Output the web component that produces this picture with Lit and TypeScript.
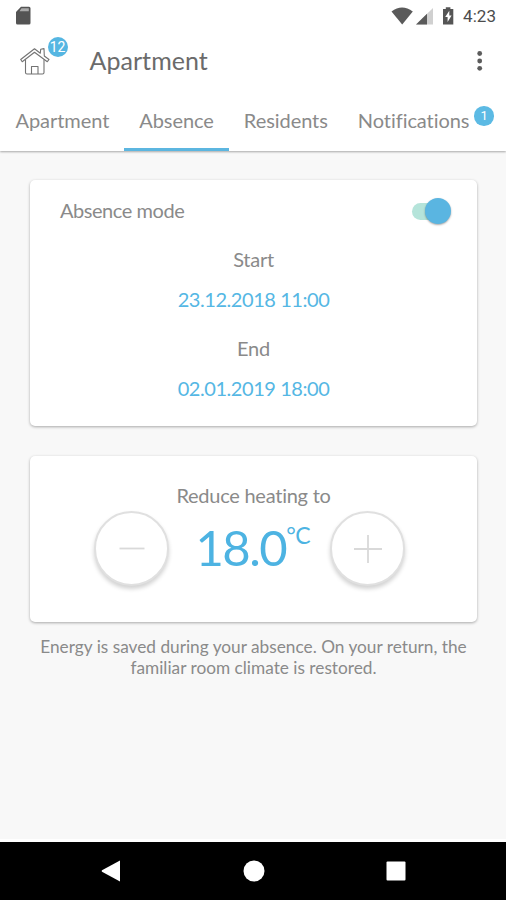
import { LitElement, html, css, svg } from "lit";
import { customElement, property, state } from "lit/decorators.js";
import { classMap } from "lit/directives/class-map.js";

@customElement("status-bar")
class StatusBar extends LitElement {
  static styles = css`
    :host { display: flex; height: 31px; align-items: center; justify-content: space-between; padding: 0 9px 0 15px; box-sizing: border-box; }
    .right { display: flex; align-items: center; }
    svg { display: block; }
    .time { font: 400 17px/20px Roboto, sans-serif; color: #4c4c4c; margin-left: 8px; width: 34px; white-space: nowrap; letter-spacing: 0.1px; }
  `;
  render() {
    return html`
      <svg width="17" height="20" viewBox="0 0 17 20">
        <path d="M6 .800H14a1.500 1.500 0 0 1 1.500 1.500V17A1.500 1.500 0 0 1 14 18.500H2.500A1.500 1.500 0 0 1 1 17V6Z" fill="#545454" />
        <path d="M6.500 2.300h7.300v3h-9.300Z" fill="#aaa" />
      </svg>
      <div class="right">
        <svg width="64" height="20" viewBox="391 5 64 20">
          <path d="M391.500 10.500Q402 2.300 412.800 10.500L402.200 23.500Z" fill="#5a5a5a" />
          <path d="M433 7V23.500H416Z" fill="#d0d0d0" />
          <path d="M427 12.800V23.500H416Z" fill="#5a5a5a" />
          <path d="M443 8h2.800V6.300h4.600V8h2.900V23.500H443Z" fill="#555" />
          <path d="M449.300 9.800L445.200 16h2.400v5l4-6.500h-2.300Z" fill="#fff" />
        </svg>
        <span class="time">4:23</span>
      </div>
    `;
  }
}

@customElement("app-header")
class AppHeader extends LitElement {
  static styles = css`
    :host { display: flex; height: 60px; align-items: center; padding: 0 20px; box-sizing: border-box; }
    .home { position: relative; width: 30px; height: 30px; margin-right: 39.500px; }
    .home svg { display: block; }
    .badge { position: absolute; left: 27.500px; top: -9px; width: 20px; height: 20px; border-radius: 50%; background: #55b6e2; color: #fff; font: 400 14px/21px Roboto, sans-serif; text-align: center; }
    h1 { margin: 0; font-size: 25px; line-height: 30px; font-weight: 400; color: #6b6b6b; flex: 1; letter-spacing: 0.050px; padding-bottom: 2px; }
    .menu { display: block; }
  `;
  render() {
    return html`
      <div class="home">
        <svg width="30" height="30" viewBox="0 0 30 30" fill="none" stroke="#737373" stroke-width="1.100" stroke-linejoin="round">
          <path d="M.700 13.500L14.500 2.800L20.300 7.200L20.700 3.300L24 2.600L24.300 10L29 13.500L27.300 15.700L14.500 6.200L2.200 15.700Z" />
          <path d="M5.500 13.500V26.500Q5.500 28 7 28H22.500Q24 28 24 26.500V13.500" />
          <path d="M11.500 28V20.500H18V28" />
        </svg>
        <span class="badge">12</span>
      </div>
      <h1>Apartment</h1>
      <svg class="menu" width="12" height="24" viewBox="0 0 12 24" fill="#5c5c5c">
        <circle cx="5.700" cy="4.500" r="2.400" /><circle cx="5.700" cy="12" r="2.400" /><circle cx="5.700" cy="19.300" r="2.400" />
      </svg>
    `;
  }
}

@customElement("tab-strip")
class TabStrip extends LitElement {
  @property({ attribute: false }) tabs: { label: string; count?: number }[] = [];
  @property({ type: Number }) active = 0;
  static styles = css`
    :host { display: flex; height: 60px; padding-left: 0.500px; box-sizing: border-box; background: #fff; position: relative; box-shadow: 0 1px 2px rgba(0, 0, 0, 0.32); clip-path: inset(0 0 -5px 0); }
    .tab { position: relative; box-sizing: border-box; height: 60px; padding: 0 15px; font-size: 20px; line-height: 59px; color: #8a8a8a; white-space: nowrap; letter-spacing: -0.060px; border-bottom: 3px solid transparent; }
    .active { border-bottom-color: #5cb6e0; }
    .badge { position: absolute; left: 131.500px; top: 15px; width: 19.500px; height: 19.500px; border-radius: 50%; background: #5cbae4; color: #fff; font: 400 13px/20px Roboto, sans-serif; text-align: center; }
  `;
  render() {
    return this.tabs.map((t, i) => html`
      <div class=${classMap({ tab: true, active: i === this.active })}>${t.label}${t.count ? html`<span class="badge">${t.count}</span>` : ""}</div>
    `);
  }
}

@customElement("round-button")
class RoundButton extends LitElement {
  @property() kind: "minus" | "plus" = "minus";
  static styles = css`
    :host { display: flex; align-items: center; justify-content: center; box-sizing: border-box; width: 75px; height: 75px; border: 2px solid #e0e0e0; border-radius: 50%; background: #fff; box-shadow: 0 3px 4px rgba(0, 0, 0, 0.18); }
    svg { display: block; }
  `;
  render() {
    return html`<svg width="30" height="30" viewBox="0 0 30 30" stroke="#d9d9d9" stroke-width="1.800" fill="none">
      ${this.kind === "plus" ? svg`<path d="M1 15H29M15 1V29" />` : svg`<path d="M2.500 14.500H27.500" />`}
    </svg>`;
  }
}

@customElement("app-root")
class AppRoot extends LitElement {
  @state() private away = true;
  private tabs = [
    { label: "Apartment" },
    { label: "Absence" },
    { label: "Residents" },
    { label: "Notifications", count: 1 },
  ];
  static styles = css`
    :host { display: flex; flex-direction: column; height: 900px; overflow: hidden; background: #fff; font-family: Lato, sans-serif; color: #8a8a8a; font-size: 20px; }
    main { flex: 1; background: #f8f8f8; border-bottom: 3px solid #fff; box-sizing: border-box; padding: 29px 29px 0 30px; display: flex; flex-direction: column; }
    .card { box-sizing: border-box; background: #fff; border-radius: 5px; box-shadow: 0 1px 3px rgba(0, 0, 0, 0.32); text-align: center; }
    .schedule { height: 246px; padding-top: 16px; }
    .row { display: flex; align-items: center; justify-content: space-between; height: 30px; padding: 0 26px 0 30px; margin-bottom: 18px; letter-spacing: -0.450px; }
    .row span { padding-bottom: 2px; }
    .switch { position: relative; width: 39px; height: 26px; display: flex; align-items: center; }
    .track { width: 34px; height: 17px; border-radius: 9px; background: #b5e4da; }
    .thumb { position: absolute; top: 0; left: 0; width: 26px; height: 26px; border-radius: 50%; background: #5ab5e1; box-shadow: 0 1px 2px rgba(0, 0, 0, 0.35); }
    .on .thumb { left: 13px; }
    .label { line-height: 30px; height: 30px; letter-spacing: -0.250px; }
    .value { line-height: 30px; height: 30px; color: #55b7e4; margin: 10px 0 19px; letter-spacing: -0.450px; }
    .heating { height: 166px; margin-top: 30px; padding-top: 24px; }
    .stepper { display: flex; align-items: center; padding: 0.500px 71.500px 0 64px; justify-content: space-between; }
    .temp { display: flex; color: #4db3e2; height: 76px; line-height: 73px; font-size: 49px; margin-left: 6px; letter-spacing: -1.500px; }
    .unit { font-size: 23px; line-height: 49px; letter-spacing: -0.500px; }
    .info { margin: 14px 0 0; font-size: 17.250px; line-height: 21px; text-align: center; white-space: nowrap; }
    nav { height: 58px; background: #000; display: flex; justify-content: space-between; align-items: center; padding: 0 100px 0 101px; box-sizing: border-box; }
    nav svg { display: block; }
  `;
  render() {
    return html`
      <status-bar></status-bar>
      <app-header></app-header>
      <tab-strip .tabs=${this.tabs} .active=${1}></tab-strip>
      <main>
        <section class="card schedule">
          <div class="row">
            <span>Absence mode</span>
            <div class=${classMap({ switch: true, on: this.away })} @click=${() => (this.away = !this.away)}>
              <div class="track"></div><div class="thumb"></div>
            </div>
          </div>
          <div class="label">Start</div>
          <div class="value">23.12.2018 11:00</div>
          <div class="label">End</div>
          <div class="value">02.01.2019 18:00</div>
        </section>
        <section class="card heating">
          <div class="label">Reduce heating to</div>
          <div class="stepper">
            <round-button kind="minus"></round-button>
            <div class="temp"><span>18.0</span><span class="unit">°C</span></div>
            <round-button kind="plus"></round-button>
          </div>
        </section>
        <p class="info">Energy is saved during your absence. On your return, the<br />familiar room climate is restored.</p>
      </main>
      <nav>
        <svg width="20" height="22" viewBox="0 0 20 22"><path d="M19 .500V21.500L1 11.700Q.300 11 1 10.300Z" fill="#fff" /></svg>
        <svg width="22" height="22" viewBox="0 0 22 22"><circle cx="11" cy="11" r="10.500" fill="#fff" /></svg>
        <svg width="20" height="20" viewBox="0 0 20 20"><rect x=".500" y=".500" width="19" height="19" rx="1" fill="#fff" /></svg>
      </nav>
    `;
  }
}
